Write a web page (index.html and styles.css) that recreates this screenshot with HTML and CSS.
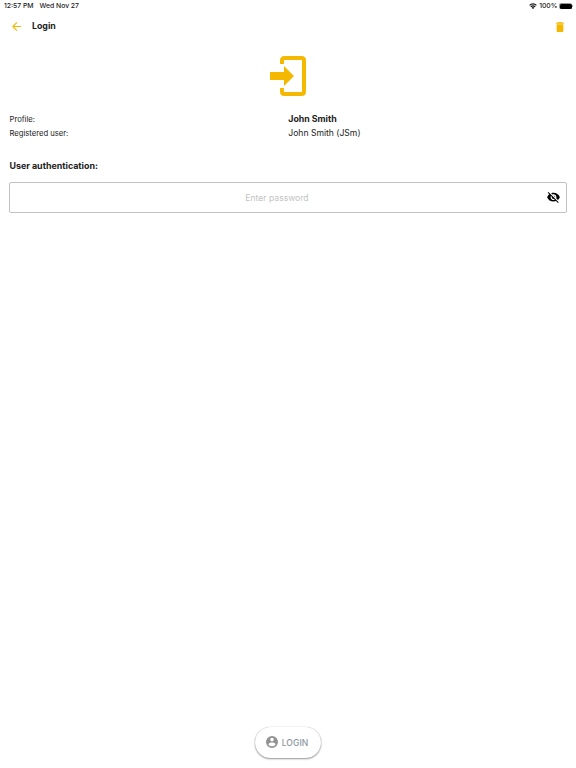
FILE: index.html
```html
<!DOCTYPE html>
<html lang="en">
<head>
<meta charset="utf-8">
<title>Login</title>
<link rel="stylesheet" href="styles.css">
</head>
<body>
<div class="status">
  <span class="time">12:57 PM</span>
  <span class="date">Wed Nov 27</span>
  <div class="indicators">
    <svg class="wifi" viewBox="0 0 16 12"><path d="M1.2 4.600a9.600 9.600 0 0 1 13.600 0M3.600 7.600a6.200 6.200 0 0 1 8.800 0" fill="none" stroke="#111" stroke-width="2.300"/><path d="M8 12L5.200 9.500a4 4 0 0 1 5.600 0z" fill="#111"/></svg>
    <span class="percent">100%</span>
    <span class="battery"><span class="charge"></span></span>
    <span class="tip"></span>
  </div>
</div>
<header class="header">
  <svg class="back" viewBox="4 4 16 16"><path d="M20 11H7.830l5.590-5.590L12 4l-8 8 8 8 1.410-1.410L7.830 13H20z"/></svg>
  <h1 class="title">Login</h1>
  <svg class="trash" viewBox="5 3 14 18"><path d="M6 19c0 1.100.9 2 2 2h8c1.100 0 2-.9 2-2V7H6zM19 4h-3.500l-1-1h-5l-1 1H5v2h14z"/></svg>
</header>
<main class="content">
  <svg class="login-icon" viewBox="0 0 36 40"><path d="M10 8V4.500Q10 0 14.500 0H31.500Q36 0 36 4.500V35.500Q36 40 31.500 40H14.500Q10 40 10 35.500V32H14V36H32V4H14V8zM0 16H14V10L24 20 14 30V24H0z"/></svg>
  <dl class="info">
    <dt>Profile:</dt><dd class="strong">John Smith</dd>
    <dt>Registered user:</dt><dd>John Smith (JSm)</dd>
  </dl>
  <h2 class="section">User authentication:</h2>
  <div class="field">
    <input class="password" type="password" placeholder="Enter password" aria-label="Password">
    <svg class="eye" viewBox="1 3 22 19"><path d="M12 7c2.760 0 5 2.240 5 5 0 .65-.13 1.260-.36 1.830l2.920 2.920c1.510-1.260 2.700-2.890 3.430-4.750-1.730-4.390-6-7.500-11-7.500-1.400 0-2.740.25-3.980.7l2.160 2.160C10.740 7.130 11.350 7 12 7zM2 4.270l2.280 2.280.46.46C3.080 8.300 1.780 10.020 1 12c1.730 4.390 6 7.500 11 7.500 1.550 0 3.030-.3 4.380-.84l.42.42L19.730 22 21 20.730 3.270 3zM7.530 9.800l1.550 1.550c-.05.21-.08.43-.08.65 0 1.660 1.340 3 3 3 .22 0 .44-.03.65-.08l1.550 1.550c-.67.33-1.410.53-2.200.53-2.760 0-5-2.240-5-5 0-.79.2-1.530.53-2.200zm4.310-.78l3.150 3.150.02-.16c0-1.660-1.340-3-3-3z"/></svg>
  </div>
</main>
<footer class="footer">
  <button class="login" type="button">
    <svg class="user" viewBox="2 2 20 20"><path d="M12 2a10 10 0 1 0 0 20 10 10 0 0 0 0-20zm0 3a3 3 0 1 1 0 6 3 3 0 0 1 0-6zm0 14.200a7.200 7.200 0 0 1-6-3.220c.03-1.990 4-3.080 6-3.080s5.970 1.090 6 3.080a7.200 7.200 0 0 1-6 3.220z"/></svg>
    <span>LOGIN</span>
  </button>
</footer>
</body>
</html>
```
FILE: styles.css
```css
* { box-sizing: border-box; }
body {
  margin: 0;
  height: 768px;
  display: flex;
  flex-direction: column;
  overflow: hidden;
  background: #fff;
  color: #212121;
  font-family: Inter, "Liberation Sans", sans-serif;
}
svg { display: block; flex: none; }
.status {
  height: 12px;
  padding: 0 3px 0 4px;
  display: flex;
  align-items: center;
  font-size: 6.8px;
  line-height: 12px;
  font-weight: 500;
  color: #222;
}
.date { margin-left: 6px; }
.indicators { display: flex; align-items: center; margin-left: auto; }
.wifi { width: 8px; height: 6px; }
.percent { margin: 0 1.5px 0 2px; }
.battery {
  width: 13px;
  height: 6px;
  border-radius: 2px;
  background: #999;
  padding: .5px;
}
.charge { display: block; height: 100%; background: #000; border-radius: 1.5px; }
.tip { width: 1px; height: 2px; background: #aaa; }
.header {
  height: 28px;
  padding: 0 12px 0 11.5px;
  display: flex;
  align-items: center;
}
.back { width: 9px; height: 9px; fill: #f5b800; margin-top: 1px; }
.title { margin: 0 0 1px 11.5px; font-size: 8.8px; line-height: 12px; font-weight: 700; }
.trash { width: 8px; height: 10px; margin-left: auto; margin-top: 1px; fill: #f5b800; }
.content { padding: 16px 9px 0; flex: 1; }
.login-icon { width: 36px; height: 40px; margin: 0 auto; fill: #f5b800; }
.info {
  margin: 16px 0 0 .5px;
  display: grid;
  grid-template-columns: 1fr 1fr;
  grid-auto-rows: 14px;
  line-height: 14px;
}
.info dt { font-size: 7.65px; padding-top: 1px; }
.info dd { margin: 0; font-size: 8.6px; }
.info .strong { font-size: 8.8px; font-weight: 700; }
.section { margin: 19px 0 0 .5px; font-size: 8.9px; line-height: 14px; font-weight: 700; }
.field {
  height: 31px;
  margin-top: 9px;
  padding: 0 6px 0 0;
  display: flex;
  align-items: center;
  border: 1px solid #c2c2c2;
  border-radius: 2px;
}
.password {
  flex: 1;
  min-width: 0;
  padding: 0 3px 0 0;
  border: 0;
  outline: 0;
  background: none;
  text-align: center;
  font: 8.6px/14px Inter, "Liberation Sans", sans-serif;
}
.password::placeholder { color: #c3c3c3; opacity: 1; }
.eye { width: 13px; height: 11px; fill: #000; }
.footer { display: flex; justify-content: center; padding-bottom: 10px; }
.login {
  width: 66px;
  height: 31px;
  padding: 0 2px 1px 0;
  display: flex;
  align-items: center;
  justify-content: center;
  gap: 4px;
  border: 0;
  border-radius: 16px;
  background: #fff;
  box-shadow: 0 1px 2px rgba(0, 0, 0, .4), 0 0 1px rgba(0, 0, 0, .3);
  font: 500 8.6px/12px Inter, "Liberation Sans", sans-serif;
  color: #8d979f;
}
.login span { padding-top: 1px; }
.user { width: 12px; height: 12px; fill: #929292; }
```
